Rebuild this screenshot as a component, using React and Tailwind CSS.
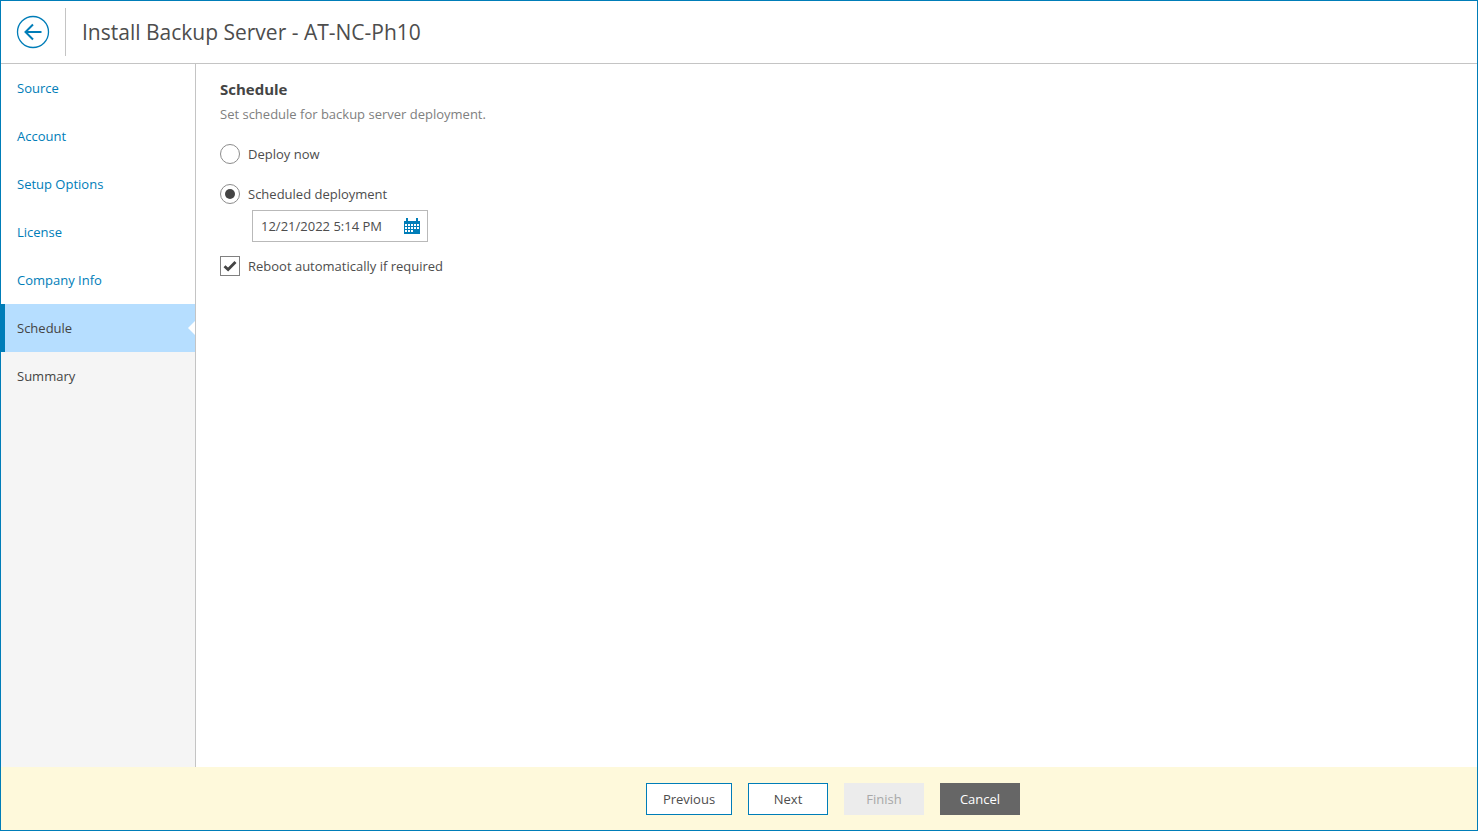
const steps = [
  { label: "Source", done: true },
  { label: "Account", done: true },
  { label: "Setup Options", done: true },
  { label: "License", done: true },
  { label: "Company Info", done: true },
  { label: "Schedule", active: true },
  { label: "Summary" },
];

function StepItem({ step }) {
  if (step.active) {
    return (
      <div className="relative h-12 flex items-center pt-0.5 pl-3 border-l-[5px] border-[#007db8] -ml-px bg-[#b6deff] text-[#444444]">
        {step.label}
        <span className="absolute right-0 top-[17px] w-0 h-0 border-y-[7px] border-y-transparent border-r-[7px] border-r-white" />
      </div>
    );
  }
  return (
    <div className={"h-12 flex items-center pt-0.5 pl-4 " + (step.done ? "text-[#007db8] bg-white" : "text-[#444444]")}>
      {step.label}
    </div>
  );
}

function BackIcon() {
  return (
    <svg width="34" height="34" viewBox="0 0 34 34" fill="none" stroke="#007db8">
      <circle cx="17" cy="17" r="15.5" strokeWidth="1.3" />
      <path d="M25.5 17H9.5M17 9.5L9.5 17l7.5 7.5" strokeWidth="2" />
    </svg>
  );
}

function CalendarIcon() {
  return (
    <svg width="16" height="16" viewBox="0 0 16 16">
      <rect x="2" y="0" width="2" height="4" fill="#007db8" />
      <rect x="12" y="0" width="2" height="4" fill="#007db8" />
      <rect x="0" y="3" width="16" height="13" fill="#007db8" />
      <path d="M1 6h2v2H1zM4 6h2v2H4zM7 6h2v2H7zM10 6h2v2h-2zM13 6h2v2h-2zM1 9h2v2H1zM4 9h2v2H4zM7 9h2v2H7zM10 9h2v2h-2zM13 9h2v2h-2zM1 12h2v2H1zM4 12h2v2H4zM7 12h2v2H7z" fill="#ffffff" />
    </svg>
  );
}

function Radio({ checked, label }) {
  return (
    <div className="flex items-center h-5 gap-2">
      <span className="w-5 h-5 rounded-full border border-[#8c8c8c] bg-white flex items-center justify-center">
        {checked && <span className="w-2.5 h-2.5 rounded-full bg-[#444444]" />}
      </span>
      <span className="mt-0.5">{label}</span>
    </div>
  );
}

export default function App() {
  return (
    <div className="w-[1478px] h-[831px] flex flex-col overflow-hidden bg-white border border-[#007db8] text-[13px] text-[#4d4d4d] font-['Open_Sans',sans-serif]">
      <header className="h-[63px] shrink-0 flex items-center border-b border-[#c4c4c4]">
        <div className="w-[65px] h-12 flex items-center justify-center border-r border-[#c4c4c4]">
          <BackIcon />
        </div>
        <h1 className="ml-4 mt-0.5 text-[21px] font-normal text-[#4d4d4d]">Install Backup Server - AT-NC-Ph10</h1>
      </header>

      <div className="flex-1 flex min-h-0">
        <nav className="w-[195px] shrink-0 bg-[#f5f5f5] border-r border-[#c4c4c4]">
          {steps.map((step) => (
            <StepItem key={step.label} step={step} />
          ))}
        </nav>

        <main className="flex-1 pl-6 pt-4">
          <h2 className="text-[15px] font-bold leading-[19px] text-[#444444]">Schedule</h2>
          <p className="mt-[6px] leading-[18px] text-[#808080]">Set schedule for backup server deployment.</p>

          <div className="mt-[21px]">
            <Radio label="Deploy now" />
          </div>
          <div className="mt-5">
            <Radio checked label="Scheduled deployment" />
          </div>

          <div className="mt-[6px] ml-8 w-44 h-8 flex items-center justify-between pl-2 pr-[7px] border border-[#b9b9b9]">
            <span className="mt-0.5">12/21/2022 5:14 PM</span>
            <CalendarIcon />
          </div>

          <div className="mt-[14px] flex items-center h-5 gap-2">
            <span className="w-5 h-5 border border-[#808080] flex items-center justify-center">
              <svg width="14" height="12" viewBox="0 0 14 12" fill="none">
                <path d="M1.5 6.2l3.6 3.3L12.5 2" stroke="#444444" strokeWidth="2.8" />
              </svg>
            </span>
            <span className="mt-0.5">Reboot automatically if required</span>
          </div>
        </main>
      </div>

      <footer className="h-[63px] shrink-0 bg-[#fef9db] flex items-center pl-[645px] gap-4">
        <button className="w-[86px] h-8 pt-0.5 bg-white border border-[#007db8] text-[#4d4d4d]">Previous</button>
        <button className="w-20 h-8 pt-0.5 bg-white border border-[#007db8] text-[#4d4d4d]">Next</button>
        <button className="w-20 h-8 pt-0.5 bg-[#ececec] text-[#a8a8a8]">Finish</button>
        <button className="w-20 h-8 pt-0.5 bg-[#666666] text-white">Cancel</button>
      </footer>
    </div>
  );
}
